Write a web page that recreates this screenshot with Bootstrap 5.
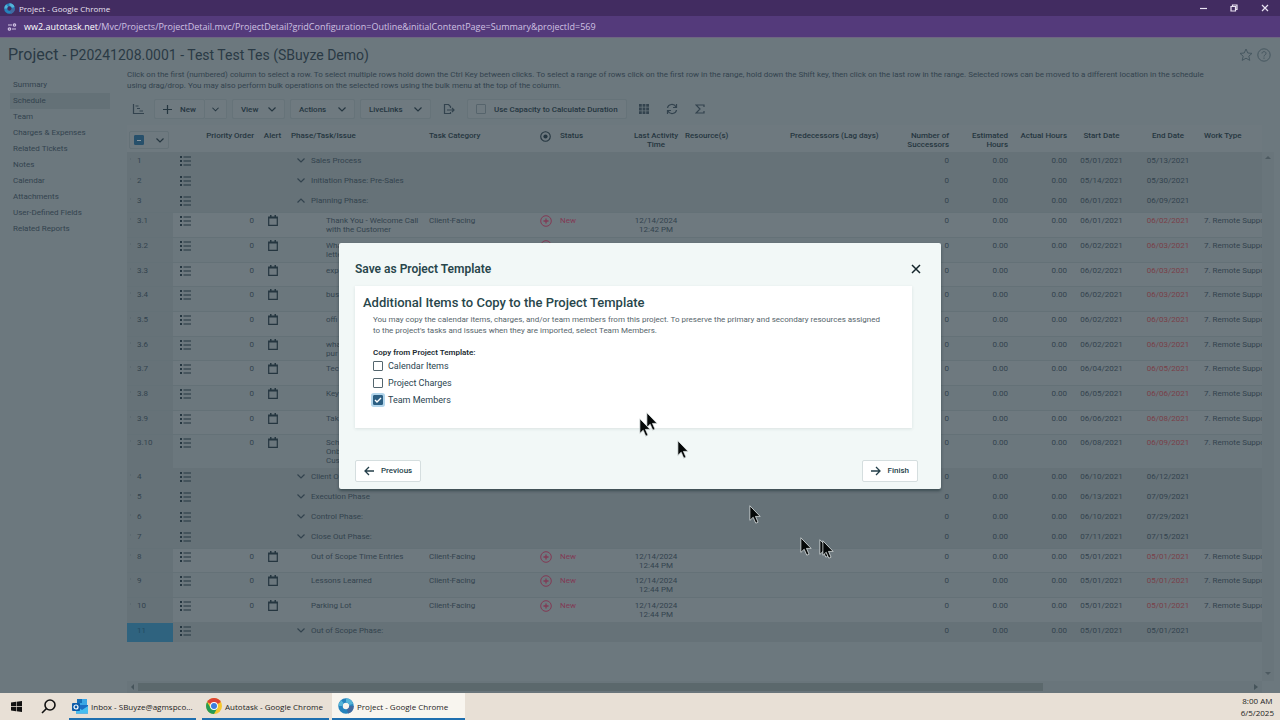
<!DOCTYPE html>
<html lang="en">
<head>
<meta charset="utf-8">
<meta name="viewport" content="width=device-width, initial-scale=1">
<title>Project - Google Chrome</title>
<link href="https://cdn.jsdelivr.net/npm/bootstrap@5.3.0/dist/css/bootstrap.min.css" rel="stylesheet">
<style>
:root{--page:#6c787e;--panel:#6e797f;--shade:#667278;--edge:#647177;--ink:#33434e;--deep:#253640;--ui:"Open Sans","Noto Sans",sans-serif}
body{font-family:Roboto,"Liberation Sans",sans-serif;font-size:8px;line-height:9px;color:var(--ink);background:var(--page);overflow-x:hidden}
svg{display:block;flex:none}
.line-icon{fill:none;stroke:currentColor;stroke-width:1.2}
.titlebar{height:16px;background:#422c61;color:#e9e2f2;font-family:var(--ui);padding:0 0 0 4px}
.titlebar button{width:31px;color:#e9e2f2}
.addressbar{height:22px;background:#543a7b;border-bottom:1px solid #6f6682;color:#cfc1e2;font-family:var(--ui);font-size:9px;line-height:12px;padding:0 4px}
.site-info{width:16px;height:16px;background:#6a4a98;color:#fff}
.plain{border:0;background:none;padding:0;color:inherit;display:flex;align-items:center;justify-content:center}
.page-title{font-size:14px;line-height:18px;padding:8px 9px 0 8px;color:#2a3a45}
.page-title .big{font-size:16px}
.side{width:127px;padding:13px 17px 0 10px}
.side a{display:block;height:16px;line-height:16px;padding-left:3px;color:var(--ink);text-decoration:none}
.side a.active{background:#647177}
.help{font-size:8px;line-height:11px;padding-top:5px}
.tool{height:20px;border:1px solid #667379;border-radius:2px;background:#6f7a80;color:var(--deep);font-weight:500;padding:0 8px}
.tool-join{border-left:0;border-radius:0 2px 2px 0;padding:0 7px}
input.tick{appearance:none;margin:0;width:10px;height:10px;border:1px solid #56646c;border-radius:1px;flex:none}
.grid-area{margin-top:6px;padding-right:6px}
.grid-main{min-width:0}
.sched{table-layout:fixed;width:100%;border-collapse:collapse;background:var(--panel)}
.sched th{font-weight:500;height:27px;padding:6px 4px 0;vertical-align:top;color:var(--deep);white-space:nowrap}
.sched td{padding:3px 4px 0;vertical-align:top;overflow:hidden}
.sched .endcell{padding-right:0;padding-left:0;white-space:nowrap}
.sched tbody tr{height:25px;border-top:1px solid var(--edge)}
.sched tbody tr:nth-child(3n){height:24px}
.sched tbody tr:nth-child(odd){background:#6b777d}
.sched tbody tr.tall{height:34px}
.sched tbody tr.phase{height:20px;background:var(--shade);border-color:var(--shade)}
.sched tbody td:first-child{background:radial-gradient(circle,#5e6b72 0 1px,transparent 1px) 2px 4px/3px 4px no-repeat,var(--shade);padding-left:10px}
.sched tbody tr.chosen td:first-child{background:#2f637f;color:#234a60}
.sched .icon-cell{padding:3px 4px 0 7px;color:var(--deep)}
.sched .mid-icon{padding:2px 0 0;color:var(--deep)}
.sched .mid-icon svg{margin:auto}
.phase-name{gap:6px;padding-left:6px}
.indent{padding-left:20px}
.deeper{padding-left:35px}
.late{color:#7a4048}
.fresh,.sched .mid-icon.fresh{color:#823a55}
.select-all{height:18px;width:40px;border:1px solid #647177;border-radius:2px}
input.some{background:#27506b;border-color:#27506b;background-image:linear-gradient(#8796a0,#8796a0);background-size:4px 1px;background-position:center;background-repeat:no-repeat}
.vbar{width:12px;background:#69757b;color:#4d5a61;padding:4px 0 5px;margin-top:27px}
.hbar{height:12px;margin-right:18px;color:#46545b;background:#69757b}
.hthumb{width:80%;height:8px;background:#5b686c}
.scrim{position:absolute;inset:0}
.dialog{width:602px;height:246px;background:#f2f8f7;border-radius:2px;box-shadow:0 2px 3px rgba(20,40,45,.5);color:#2b4450;padding:0 16px}
.dialog h2{font-size:12px;line-height:14px;font-weight:600;color:#28464b;margin:0}
.dialog .sheet h2{font-size:13px;font-weight:500}
.dialog-head{height:43px;padding:9px 4px 0 0}
.sheet{margin-right:13px;height:142px;background:#fff;box-shadow:0 1px 3px rgba(40,70,70,.12);padding:10px 8px 0}
.sheet .body-text{line-height:11px;color:#56656b;margin:4px 0 0 10px;padding-right:18px}
.sheet fieldset{margin:12px 0 0 10px}
.sheet legend{font-size:8px;line-height:10px;font-weight:600;color:#1d2d33;margin:0;float:none}
.choice{height:17px;font-size:9px;gap:5px}
.choice input.tick{border-color:#54666e;background:#fff}
.choice input.tick:checked{border-color:#2c5f83;background:#2c5f83 url("data:image/svg+xml,%3Csvg xmlns='http://www.w3.org/2000/svg' viewBox='0 0 10 10'%3E%3Cpath d='M2 5l2 2 4-4' fill='none' stroke='%23fff' stroke-width='1.4'/%3E%3C/svg%3E") center/10px;box-shadow:0 0 0 2px #b3d6ec}
.dialog-foot{margin:32px 7px 0 0}
.action{height:22px;background:#fff;border:1px solid #d5dedf;border-radius:2px;color:#243f4a;font-weight:500;padding:0 8px;gap:7px}
.taskbar{height:27px;background:#e8e0d6;color:#1d1d1d;font-family:var(--ui);padding-right:6px}
.task{height:27px;border:0;border-bottom:2px solid #1f6faf;background:none;padding:1px 6px 0;gap:3px;justify-content:flex-start;white-space:nowrap;color:#1d1d1d}
.task.current{background:#f8f5ef}
.clock{line-height:12px;text-align:center}
.pointer{position:absolute}
</style>
</head>
<body class="d-flex flex-column min-vh-100">
<svg width="0" height="0" class="position-absolute" aria-hidden="true">
  <symbol id="list" viewBox="0 0 11 10"><path d="M0 1h2M0 5h2M0 9h2" stroke="currentColor" stroke-width="2"/><path d="M3.500 1H11M3.500 5H11M3.500 9H11" stroke="currentColor" stroke-width="1.200"/></symbol>
  <symbol id="cal" viewBox="0 0 10 11"><path d="M.7 2.200h8.600v8.100H.7z" fill="none" stroke="currentColor" stroke-width="1.200"/><path d="M.5 2h9v1.500h-9zM2 0h1.500v2H2zM6.500 0H8v2H6.500z" fill="currentColor"/></symbol>
  <symbol id="plusring" viewBox="0 0 12 12"><circle cx="6" cy="6" r="5.300" fill="none" stroke="currentColor"/><path d="M3.500 6h5M6 3.500v5" stroke="currentColor" stroke-width="1.300"/></symbol>
  <symbol id="down" viewBox="0 0 8 5"><path d="M.5.5 4 4 7.500.5" fill="none" stroke="currentColor" stroke-width="1.200"/></symbol>
  <symbol id="up" viewBox="0 0 8 5"><path d="M.5 4.500 4 1l3.500 3.500" fill="none" stroke="currentColor" stroke-width="1.200"/></symbol>
  <symbol id="arrow" viewBox="0 0 12 20"><path d="M.6.8v15.400l3.500-3.300 2.700 6.200 2.400-1-2.700-6.100h4.900z" fill="#050808" stroke="#e4eaea" stroke-width=".8"/></symbol>
  <symbol id="ring" viewBox="0 0 16 16"><circle cx="8" cy="8" r="5.500" fill="none" stroke="#2583bd" stroke-width="4.500"/><path d="M8 2.500a5.500 5.500 0 0 1 5.300 4M2.500 8a5.500 5.500 0 0 1 2-4.200" fill="none" stroke="#55b4d8" stroke-width="4"/><path d="M13.500 8a5.500 5.500 0 0 1-4 5.300" fill="none" stroke="#4169a0" stroke-width="4.500"/></symbol>
</svg>

<header>
  <div class="titlebar d-flex align-items-center">
    <svg width="11" height="11"><use href="#ring"/></svg>
    <span class="ms-1 ps-0">Project - Google Chrome</span>
    <div class="ms-auto d-flex">
      <button class="plain" aria-label="Minimize"><svg width="8" height="8" class="line-icon"><path d="M1 4.500h7"/></svg></button>
      <button class="plain" aria-label="Restore"><svg width="8" height="8" class="line-icon"><path d="M1 2.500h4.500V7H1zM2.500 2.500V1H7v4.500H5.500"/></svg></button>
      <button class="plain" aria-label="Close window"><svg width="8" height="8" class="line-icon"><path d="m1 1 6 6M7 1 1 7"/></svg></button>
    </div>
  </div>
  <div class="addressbar d-flex align-items-center">
    <button class="plain site-info rounded-circle" aria-label="Site information"><svg width="10" height="8" class="line-icon"><path d="M1 2h4M5 6h4"/><circle cx="7.500" cy="2" r="1.200"/><circle cx="2.500" cy="6" r="1.200"/></svg></button>
    <span class="ms-1"><span class="text-white">ww2.autotask.net</span>/Mvc/Projects/ProjectDetail.mvc/ProjectDetail?gridConfiguration=Outline&amp;initialContentPage=Summary&amp;projectId=569</span>
  </div>
</header>

<div class="position-relative flex-grow-1 d-flex flex-column">
  <div class="page-title d-flex align-items-center">
    <h1 class="m-0 fw-normal big lh-1">Project</h1><span class="ms-1">- P20241208.0001 - Test Test Tes (SBuyze Demo)</span>
    <div class="ms-auto d-flex gap-1">
      <button class="plain" aria-label="Favorite"><svg width="14" height="14" viewBox="0 0 14 14" fill="none" stroke="#465760"><path d="m7 1 1.800 4 4.200.4-3.200 2.800 1 4.200L7 10.200l-3.800 2.200 1-4.200L1 5.400 5.200 5z"/></svg></button>
      <button class="plain" aria-label="Help"><svg width="14" height="14" viewBox="0 0 14 14" fill="none" stroke="#465760"><circle cx="7" cy="7" r="6.200"/><path d="M5 5.500C5 3 9 3 9 5.400 9 7 7 6.800 7 8.500M7 9.500v1.300"/></svg></button>
    </div>
  </div>
  <div class="d-flex flex-grow-1">
    <nav class="side flex-shrink-0">
      <a href="#">Summary</a><a href="#" class="active">Schedule</a><a href="#">Team</a><a href="#">Charges &amp; Expenses</a><a href="#">Related Tickets</a><a href="#">Notes</a><a href="#">Calendar</a><a href="#">Attachments</a><a href="#">User-Defined Fields</a><a href="#">Related Reports</a>
    </nav>
    <main class="d-flex flex-column flex-grow-1">
      <p class="help m-0 pe-4">Click on the first (numbered) column to select a row. To select multiple rows hold down the Ctrl Key between clicks. To select a range of rows click on the first row in the range, hold down the Shift key, then click on the last row in the range. Selected rows can be moved to a different location in the schedule<br>using drag/drop. You may also perform bulk operations on the selected rows using the bulk menu at the top of the column.</p>
      <div class="d-flex align-items-center mt-2">
        <button class="plain ms-1" aria-label="Gantt view"><svg width="14" height="12" class="line-icon"><path d="M2.500 1v9.500H13M4.500 3h3M6 5.500h3M8.500 8H12"/></svg></button>
        <button class="tool d-flex align-items-center gap-2" style="margin-left:9px"><svg width="9" height="9" class="line-icon"><path d="M4.500 0v9M0 4.500h9"/></svg>New</button>
        <button class="tool tool-join" aria-label="More new items"><svg width="7" height="5"><use href="#down"/></svg></button>
        <button class="tool d-flex align-items-center justify-content-between" style="width:53px;margin-left:5px">View<svg width="8" height="5"><use href="#down"/></svg></button>
        <button class="tool d-flex align-items-center justify-content-between" style="width:65px;margin-left:5px">Actions<svg width="8" height="5"><use href="#down"/></svg></button>
        <button class="tool d-flex align-items-center justify-content-between" style="width:71px;margin-left:5px">LiveLinks<svg width="8" height="5"><use href="#down"/></svg></button>
        <button class="plain" style="margin-left:12px" aria-label="Export"><svg width="12" height="12" class="line-icon"><path d="M7.500 9v1.500H1.500v-9h4l2 2V5M4 7h7M9 5l2 2-2 2"/></svg></button>
        <label class="tool d-flex align-items-center gap-2" style="margin-left:12px"><input class="tick" type="checkbox">Use Capacity to Calculate Duration</label>
        <button class="plain" style="margin-left:12px" aria-label="Columns"><svg width="10" height="10" fill="currentColor"><path d="M0 0h2.800v2.800H0zM3.600 0h2.800v2.800H3.600zM7.200 0H10v2.800H7.200zM0 3.600h2.800v2.800H0zM3.600 3.600h2.800v2.800H3.600zM7.200 3.600H10v2.800H7.200zM0 7.200h2.800V10H0zM3.600 7.200h2.800V10H3.600zM7.200 7.200H10V10H7.200z"/></svg></button>
        <button class="plain" style="margin-left:17px" aria-label="Refresh"><svg width="12" height="12" class="line-icon"><path d="M1.500 5C2 1 8 0 10 4M10.500 1v3.500H7M10.500 7C10 11 4 12 2 8M1.500 11V7.500H5"/></svg></button>
        <button class="plain" style="margin-left:17px" aria-label="Totals"><svg width="10" height="10" class="line-icon"><path d="M9 3V1H1l4 4-4 4h8V7"/></svg></button>
      </div>
      <div class="grid-area d-flex flex-grow-1">
        <div class="grid-main flex-grow-1">
          <table class="sched">
            <colgroup><col width="46"><col width="26"><col width="59"><col width="29"><col width="138"><col width="110"><col width="21"><col width="75"><col width="50"><col><col width="110"><col width="57"><col width="59"><col width="59"><col width="61"><col width="72"><col width="58"></colgroup>
            <thead><tr>
              <th colspan="2" class="px-0"><div class="select-all d-flex align-items-center justify-content-between" style="margin-left:2px;padding:0 4px"><input class="tick some" type="checkbox" aria-label="Select all rows"><svg width="8" height="5"><use href="#down"/></svg></div></th>
              <th class="text-end">Priority Order</th><th class="text-center">Alert</th><th>Phase/Task/Issue</th><th>Task Category</th>
              <th class="px-0"><svg class="m-auto" width="11" height="11" viewBox="0 0 12 12"><circle cx="6" cy="6" r="5.200" fill="none" stroke="currentColor" stroke-width="1.200"/><circle cx="6" cy="6" r="2.300" fill="currentColor"/></svg></th>
              <th>Status</th><th class="text-center px-0">Last Activity<br>Time</th><th>Resource(s)</th><th>Predecessors (Lag days)</th><th class="text-end">Number of<br>Successors</th><th class="text-end">Estimated<br>Hours</th><th class="text-end">Actual Hours</th><th class="text-center">Start Date</th><th class="text-center">End Date</th><th class="px-0">Work Type</th>
            </tr></thead>
            <tbody id="rows"></tbody>
          </table>
        </div>
        <div class="vbar flex-shrink-0 d-flex flex-column align-items-center justify-content-between"><svg width="6" height="4" fill="currentColor"><path d="m3 0 3 3H0z"/></svg><svg width="6" height="4" fill="currentColor"><path d="m0 0 3 3 3-3z"/></svg></div>
      </div>
      <div class="hbar d-flex align-items-center pe-1"><svg class="mx-1" width="3" height="6" fill="currentColor"><path d="M3 0v6L0 3z"/></svg><div class="hthumb"></div><svg class="ms-auto" width="4" height="6" fill="currentColor"><path d="M0 0v6l4-3z"/></svg></div>
    </main>
  </div>

  <div class="scrim d-flex align-items-center justify-content-center">
    <section class="dialog" role="dialog" aria-labelledby="dialogTitle">
      <div class="dialog-head d-flex align-items-center justify-content-between">
        <h2 id="dialogTitle">Save as Project Template</h2>
        <button class="plain" aria-label="Close"><svg width="10" height="10" fill="none" stroke="#14252b" stroke-width="1.500"><path d="m1 1 8 8M9 1 1 9"/></svg></button>
      </div>
      <div class="sheet">
        <h2>Additional Items to Copy to the Project Template</h2>
        <p class="body-text">You may copy the calendar items, charges, and/or team members from this project. To preserve the primary and secondary resources assigned to the project's tasks and issues when they are imported, select Team Members.</p>
        <fieldset>
          <legend>Copy from Project Template:</legend>
          <label class="choice d-flex align-items-center"><input class="tick" type="checkbox">Calendar Items</label>
          <label class="choice d-flex align-items-center"><input class="tick" type="checkbox">Project Charges</label>
          <label class="choice d-flex align-items-center"><input class="tick" type="checkbox" checked>Team Members</label>
        </fieldset>
      </div>
      <div class="dialog-foot d-flex justify-content-between">
        <button class="action d-flex align-items-center"><svg width="10" height="10" fill="none" stroke="currentColor" stroke-width="1.300"><path d="M10 5H1M5 1 1 5l4 4"/></svg>Previous</button>
        <button class="action d-flex align-items-center"><svg width="10" height="10" fill="none" stroke="currentColor" stroke-width="1.300"><path d="M0 5h9M5 1l4 4-4 4"/></svg>Finish</button>
      </div>
    </section>
  </div>
</div>

<footer class="taskbar d-flex align-items-center">
  <button class="plain" style="width:32px" aria-label="Start"><svg width="11" height="11"><path d="M0 1.500 5 .8v4.500H0zM5.600.7 11 0v5.300H5.600zM0 5.900h5v4.400L0 9.600zM5.600 5.900H11V11l-5.400-.7z" fill="#111"/></svg></button>
  <button class="plain" style="width:32px" aria-label="Search"><svg width="15" height="15" fill="none" stroke="#111" stroke-width="1.600"><circle cx="9" cy="6" r="5"/><path d="M5.500 9.500 1 14"/></svg></button>
  <button class="plain task" style="width:127px;margin-left:5px;padding-left:3px"><svg width="16" height="15"><path d="M5 0h10v8H5z" fill="#3ba7e5"/><path d="M5 0h5v4H5z" fill="#1670b8"/><path d="M4 6h12v8.500H4z" fill="#1b6fc4"/><path d="m4 7 6 4 6-4v7.500H4z" fill="#45bdf0"/><rect y="4" width="8" height="8" rx="1" fill="#0f5ca8"/><circle cx="4" cy="8" r="2" fill="none" stroke="#fff" stroke-width="1.200"/></svg>Inbox - SBuyze@agmspco...</button>
  <button class="plain task" style="width:127px;margin-left:6px;padding-left:4px"><svg width="16" height="16" viewBox="0 0 16 16"><circle cx="8" cy="8" r="8" fill="#f6c62d"/><path d="M8 8 1.100 4A8 8 0 0 1 14.900 4z" fill="#dc4437"/><path d="M1.100 4A8 8 0 0 0 8 16l3.400-6H4.600z" fill="#259b55"/><circle cx="8" cy="8" r="3.900" fill="#fff"/><circle cx="8" cy="8" r="3" fill="#3d7de0"/></svg>Autotask - Google Chrome</button>
  <button class="plain task current" style="width:133px;margin-left:3px"><svg width="16" height="16"><use href="#ring"/></svg>Project - Google Chrome</button>
  <div class="clock ms-auto">8:00 AM<br>6/5/2025</div>
</footer>

<div id="pointers" aria-hidden="true"></div>
<script src="https://cdn.jsdelivr.net/npm/bootstrap@5.3.0/dist/js/bootstrap.bundle.min.js"></script>
<script>
// number, name, start, end, kind (phase / open phase / sub-task / task), activity time
const rows = [
  ['1','Sales Process','05/01/2021','05/13/2021','phase'],
  ['2','Initiation Phase: Pre-Sales','05/14/2021','05/30/2021','phase'],
  ['3','Planning Phase:','06/01/2021','06/09/2021','open'],
  ['3.1','Thank You - Welcome Call with the Customer','06/01/2021','06/02/2021','sub','12:42 PM'],
  ['3.2','What to expect welcome letter','06/02/2021','06/03/2021','sub','12:42 PM'],
  ['3.3','exp','06/02/2021','06/03/2021','sub'],
  ['3.4','bus','06/02/2021','06/03/2021','sub'],
  ['3.5','offi','06/02/2021','06/03/2021','sub'],
  ['3.6','wha<br>pur','06/02/2021','06/03/2021','sub'],
  ['3.7','Tec','06/04/2021','06/05/2021','sub'],
  ['3.8','Key','06/05/2021','06/06/2021','sub'],
  ['3.9','Tak','06/06/2021','06/08/2021','sub'],
  ['3.10','Sch<br>Onb<br>Cus','06/08/2021','06/09/2021','sub'],
  ['4','Client O','06/10/2021','06/12/2021','phase'],
  ['5','Execution Phase','06/13/2021','07/09/2021','phase'],
  ['6','Control Phase:','06/10/2021','07/29/2021','phase'],
  ['7','Close Out Phase:','07/11/2021','07/15/2021','phase'],
  ['8','Out of Scope Time Entries','05/01/2021','05/01/2021','task','12:44 PM'],
  ['9','Lessons Learned','05/01/2021','05/01/2021','task','12:44 PM'],
  ['10','Parking Lot','05/01/2021','05/01/2021','task','12:44 PM'],
  ['11','Out of Scope Phase:','05/01/2021','05/01/2021','phase']
];
const icon = (id, w, h) => `<svg width="${w}" height="${h}"><use href="#${id}"/></svg>`;
document.getElementById('rows').innerHTML = rows.map(([no, name, start, end, kind, time]) => {
  const phase = kind === 'phase' || kind === 'open';
  const cls = (phase ? 'phase' : '') + (no === '3.10' ? 'tall' : '') + (no === '11' ? ' chosen' : '');
  const label = phase
    ? `<div class="phase-name d-flex align-items-center">${icon(kind === 'open' ? 'up' : 'down', 8, 5)}<span>${name}</span></div>`
    : `<div class="${kind === 'sub' ? 'deeper' : 'indent'}">${name}</div>`;
  return `<tr class="${cls}"><td>${no}</td><td class="icon-cell">${icon('list', 11, 10)}</td>
    <td class="text-end">${phase ? '' : '0'}</td><td class="mid-icon">${phase ? '' : icon('cal', 10, 11)}</td>
    <td>${label}</td><td>${time ? 'Client-Facing' : ''}</td>
    <td class="mid-icon fresh">${time ? icon('plusring', 12, 12) : ''}</td><td class="fresh">${time ? 'New' : ''}</td>
    <td class="text-center px-0">${time ? '12/14/2024<br>' + time : ''}</td><td></td><td></td>
    <td class="text-end">0</td><td class="text-end">0.00</td><td class="text-end">0.00</td>
    <td class="text-center">${start}</td><td class="text-center${phase ? '' : ' late'}">${end}</td>
    <td class="endcell">${phase ? '' : '7. Remote Support'}</td></tr>`;
}).join('');
// trail of the moving mouse pointer
document.getElementById('pointers').innerHTML = [[646,412],[639,418],[677,440],[749,505],[800,537],[819,539],[822,540]]
  .map(([x, y]) => `<svg class="pointer" width="12" height="19" style="left:${x}px;top:${y}px"><use href="#arrow"/></svg>`).join('');
</script>
</body>
</html>
